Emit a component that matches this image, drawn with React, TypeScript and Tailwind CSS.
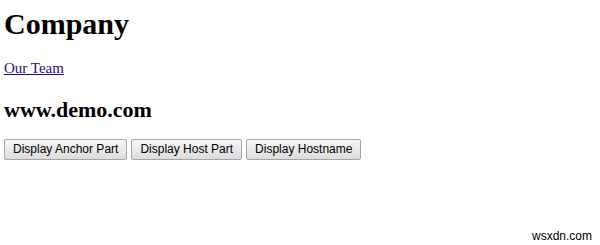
export default function App() {
  const btn =
    "h-[21px] px-[8px] border border-[#a6a6a6] rounded-[2px] bg-gradient-to-b from-[#f6f6f6] to-[#dcdcdc] text-[12px] leading-[19px] text-black [font-family:'Liberation_Sans',Arial,sans-serif]";
  return (
    <div className="relative w-[600px] h-[245px] bg-white overflow-hidden pl-[4px] pt-[7px] [font-family:'Liberation_Serif','Times_New_Roman',serif]">
      <h1 className="text-[30px] leading-[34px] font-bold text-black">Company</h1>
      <div className="mt-[19px] text-[15px] leading-[17px]">
        <a href="#" className="underline text-[#1c0f8c]">Our Team</a>
      </div>
      <h2 className="mt-[20px] text-[22px] leading-[25px] font-bold text-black">www.demo.com</h2>
      <div className="mt-[17px] flex gap-[4px]">
        <button className={btn}>Display Anchor Part</button>
        <button className={btn}>Display Host Part</button>
        <button className={btn}>Display Hostname</button>
      </div>
      <div className="absolute right-[8px] top-[229px] text-[12px] leading-[14px] text-black [font-family:'Liberation_Sans',Arial,sans-serif]">
        wsxdn.com
      </div>
    </div>
  );
}
